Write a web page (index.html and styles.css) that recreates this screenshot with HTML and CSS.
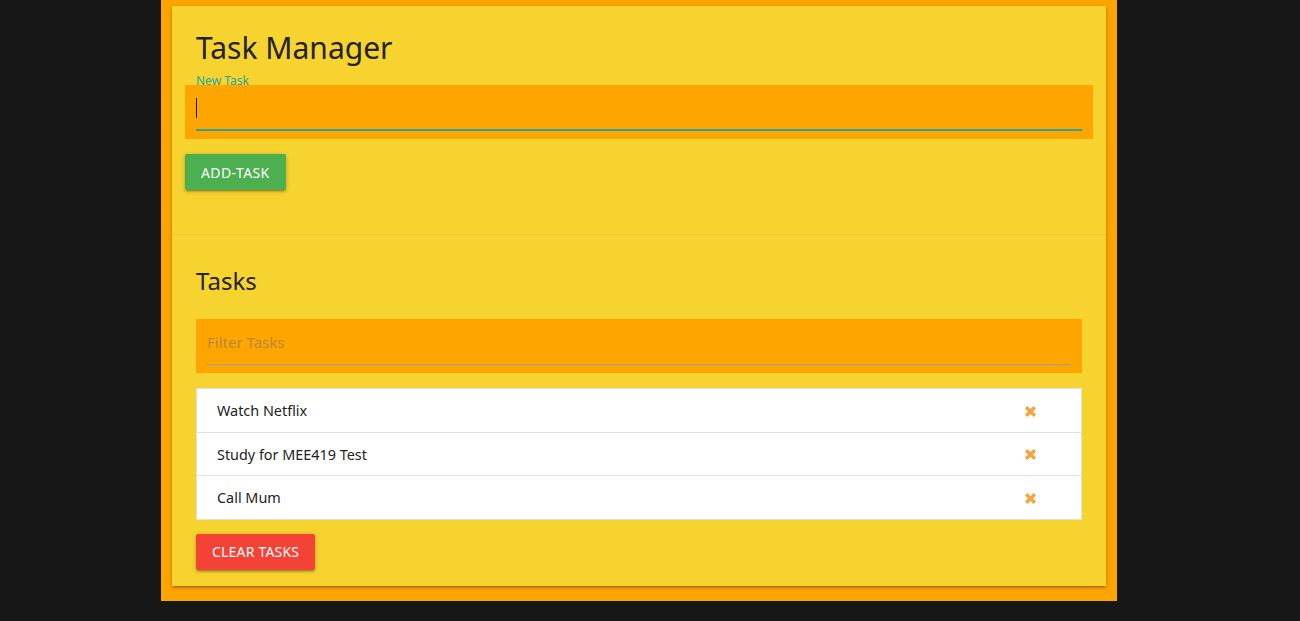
FILE: index.html
```html
<!DOCTYPE html>
<html lang="en">
<head>
<meta charset="utf-8">
<title>Task Manager</title>
<link rel="stylesheet" href="styles.css">
</head>
<body>
<div class="wrap">
  <div class="card">
    <div class="card-content">
      <h1 class="title">Task Manager</h1>
      <label class="label" for="task">New Task</label>
      <div class="field">
        <div class="input active" id="task"><span class="caret"></span></div>
      </div>
      <button class="btn btn-green">ADD-TASK</button>
    </div>
    <div class="card-action">
      <h2 class="subtitle">Tasks</h2>
      <div class="field field-filter">
        <div class="input filter"><span class="placeholder">Filter Tasks</span></div>
      </div>
      <ul class="collection">
        <li class="item"><span>Watch Netflix</span><svg class="x" viewBox="0 0 12 12"><path d="M2 2 L10 10 M10 2 L2 10"/></svg></li>
        <li class="item"><span>Study for MEE419 Test</span><svg class="x" viewBox="0 0 12 12"><path d="M2 2 L10 10 M10 2 L2 10"/></svg></li>
        <li class="item"><span>Call Mum</span><svg class="x" viewBox="0 0 12 12"><path d="M2 2 L10 10 M10 2 L2 10"/></svg></li>
      </ul>
      <button class="btn btn-red">CLEAR TASKS</button>
    </div>
  </div>
</div>
</body>
</html>
```

FILE: styles.css
```css
html, body {
  margin: 0;
  padding: 0;
  background: #171717;
  font-family: "Noto Sans", "Open Sans", sans-serif;
  color: rgba(0, 0, 0, 0.87);
}

.wrap {
  width: 956px;
  height: 601px;
  box-sizing: border-box;
  margin-left: 161px;
  background: #ffa500;
  padding: 6px 11px 15px 11px;
}

.card {
  background: #f7d330;
  height: 580px;
  box-shadow: 0 2px 2px 0 rgba(0,0,0,0.14), 0 3px 1px -2px rgba(0,0,0,0.12), 0 1px 5px 0 rgba(0,0,0,0.2);
  display: flex;
  flex-direction: column;
}

.card-content {
  padding: 22px 13px 44px 13px;
  display: flex;
  flex-direction: column;
  align-items: flex-start;
}

.title {
  margin: 0;
  padding-left: 11px;
  font-size: 30px;
  line-height: 40px;
  font-weight: 400;
  color: #222;
}

.label {
  display: block;
  padding-left: 11px;
  margin-top: 6px;
  margin-bottom: -3px;
  font-size: 12px;
  line-height: 14px;
  color: #26a69a;
}

.field {
  align-self: stretch;
  background: #ffa500;
  padding: 0 11px 8px 11px;
}

.input {
  height: 46px;
  box-sizing: border-box;
  border-bottom: 1px solid #9e9e9e;
  display: flex;
  align-items: center;
  font-size: 15px;
}

.input.active {
  border-bottom: 2px solid #26a69a;
  padding-top: 1px;
}

.caret {
  width: 1px;
  height: 20px;
  background: #111;
}

.btn {
  border: none;
  border-radius: 2px;
  height: 36px;
  padding: 0 16px;
  font-family: "Noto Sans", "Open Sans", sans-serif;
  font-size: 14px;
  letter-spacing: 0.4px;
  color: #fff;
  box-shadow: 0 2px 2px 0 rgba(0,0,0,0.14), 0 3px 1px -2px rgba(0,0,0,0.12), 0 1px 5px 0 rgba(0,0,0,0.2);
}

.btn-green {
  background: #4caf50;
  margin-top: 15px;
}

.btn-red {
  background: #f44336;
  margin-top: 14px;
  padding: 0 16px;
  letter-spacing: 0.2px;
}

.card-action {
  border-top: 1px solid rgba(160, 160, 160, 0.2);
  padding: 30px 24px 16px 24px;
  display: flex;
  flex-direction: column;
  align-items: flex-start;
}

.subtitle {
  margin: 0;
  font-size: 24px;
  line-height: 32px;
  font-weight: 400;
  color: #222;
}

.field-filter {
  margin-top: 22px;
}

.filter {
  padding-top: 1px;
}

.placeholder {
  color: rgba(120, 110, 100, 0.55);
}

.collection {
  align-self: stretch;
  list-style: none;
  margin: 15px 0 0 0;
  padding: 0;
  background: #fff;
  border: 1px solid #e0e0e0;
}

.item {
  display: flex;
  align-items: center;
  justify-content: space-between;
  padding: 11px 44px 9px 20px;
  font-size: 14.4px;
  line-height: 22.5px;
  color: #222;
  border-bottom: 1px solid #e0e0e0;
}

.item:last-child {
  border-bottom: none;
}

.x {
  width: 13px;
  height: 13px;
  stroke: #f7a440;
  stroke-width: 3.2;
  fill: none;
}
```
